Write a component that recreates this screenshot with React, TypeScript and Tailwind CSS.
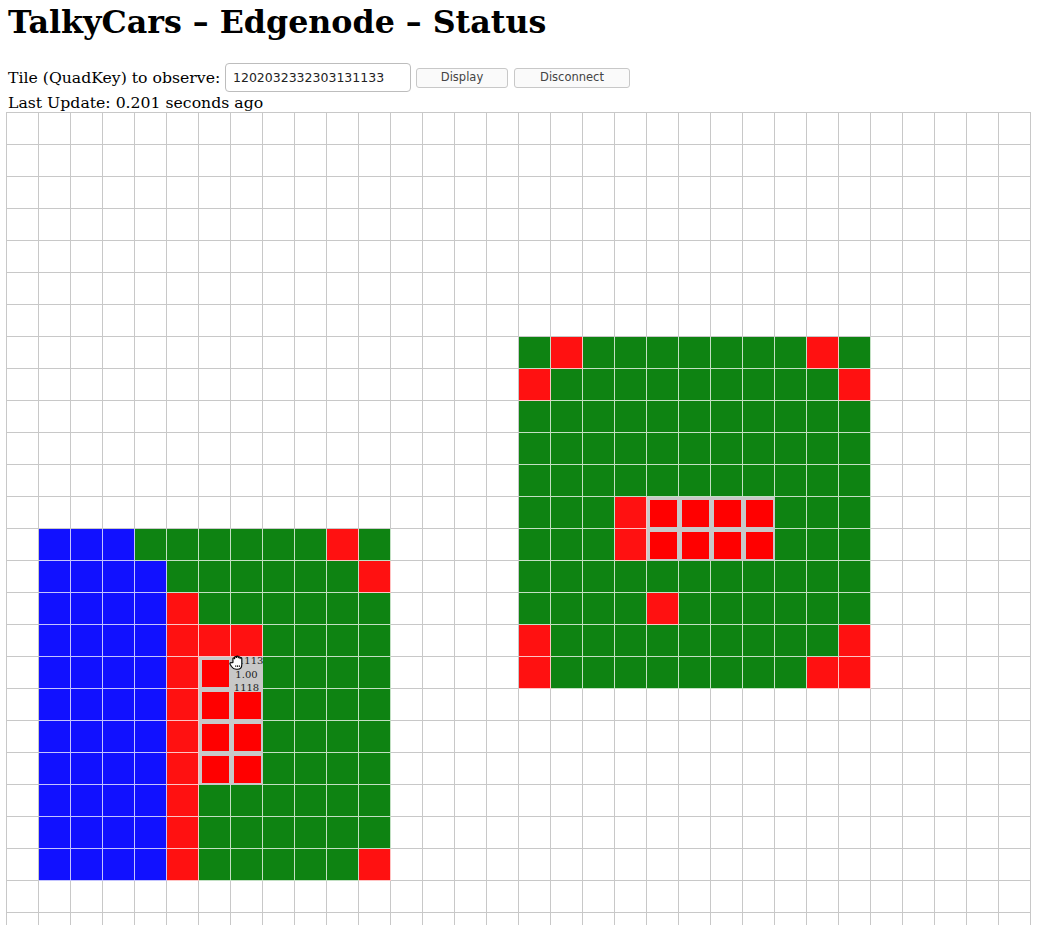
type Kind = 'B' | 'G' | 'R' | 'H' | 'T' | null

// block rows, top-left anchored at (row, col) of the tile grid
const LEFT = {
  row: 13,
  col: 1,
  cells: [
    'BBBGGGGGGRG',
    'BBBBGGGGGGR',
    'BBBBRGGGGGG',
    'BBBBRRRGGGG',
    'BBBBRHTGGGG',
    'BBBBRHHGGGG',
    'BBBBRHHGGGG',
    'BBBBRHHGGGG',
    'BBBBRGGGGGG',
    'BBBBRGGGGGG',
    'BBBBRGGGGGR',
  ],
}

const RIGHT = {
  row: 7,
  col: 16,
  cells: [
    'GRGGGGGGGRG',
    'RGGGGGGGGGR',
    'GGGGGGGGGGG',
    'GGGGGGGGGGG',
    'GGGGGGGGGGG',
    'GGGRHHHHGGG',
    'GGGRHHHHGGG',
    'GGGGGGGGGGG',
    'GGGGRGGGGGG',
    'RGGGGGGGGGR',
    'RGGGGGGGGRR',
  ],
}

const COLS = 32
const ROWS = 26

function kindAt(r: number, c: number): Kind {
  for (const block of [LEFT, RIGHT]) {
    const line = block.cells[r - block.row]
    if (!line) continue
    const ch = line[c - block.col]
    if (ch) return ch as Kind
  }
  return null
}

function HandCursor() {
  return (
    <svg width="18" height="17" viewBox="0 0 16 15" className="absolute -left-[2px] -top-[3px]">
      <path
        d="M3.5 7.5 V4.2 C3.5 3.2 5 3.2 5 4.2 V3 C5 2 6.6 2 6.6 3 V2.6 C6.6 1.6 8.2 1.6 8.2 2.6 V3.2 C8.2 2.2 9.8 2.2 9.8 3.2 V4 C9.8 3 11.4 3 11.4 4 V9 C11.4 11.5 10 13.5 7.5 13.5 H6.5 C4.5 13.5 3.2 12.5 2.2 11 L1 9 C0.5 8 1.8 7 2.6 7.8 Z"
        fill="#fff"
        stroke="#000"
        strokeWidth="1"
        strokeLinejoin="round"
      />
      <path d="M6 10 V11.5 M7.6 10 V11.5 M9.2 10 V11.5" stroke="#000" strokeWidth="0.8" />
    </svg>
  )
}

function Cell({ kind }: { kind: Kind }) {
  const base = 'w-[32px] h-[32px] border-r border-b'
  if (kind === 'B') return <div className={`${base} bg-[#1111ff] border-white/75`} />
  if (kind === 'G') return <div className={`${base} bg-[#0e8312] border-white/75`} />
  if (kind === 'R') return <div className={`${base} bg-[#ff1111] border-white/75`} />
  if (kind === 'H')
    return (
      <div className={`${base} bg-[#c8c8c8] border-[#c8c8c8] pt-[3px] pl-[3px] pr-[1px] pb-[1px]`}>
        <div className="w-full h-full bg-[#ff0000]" />
      </div>
    )
  if (kind === 'T')
    return (
      <div className={`${base} relative bg-[#c8c8c8] border-[#c8c8c8]`}>
        <div className="absolute -top-[3px] left-0 w-full text-center text-[10px] leading-[13.5px] text-[#222] font-['DejaVu_Serif',serif]">
          <div className="-mr-[2px]">11113</div>
          <div>1.00</div>
          <div>1118</div>
        </div>
        <HandCursor />
      </div>
    )
  return <div className={`${base} border-[#c8c8c8]`} />
}

export default function App() {
  const cells = []
  for (let r = 0; r < ROWS; r++) {
    for (let c = 0; c < COLS; c++) {
      cells.push(<Cell key={`${r}-${c}`} kind={kindAt(r, c)} />)
    }
  }

  return (
    <div className="h-[925px] overflow-hidden bg-white text-black font-['DejaVu_Serif',serif]">
      <div className="px-2">
        <h1 className="pt-[3px] mb-[23px] text-[31.7px] leading-[37px] font-bold">
          TalkyCars – Edgenode – Status
        </h1>
        <div className="flex items-center h-[30px] text-[15.7px]">
          <span className="w-[217px] shrink-0">Tile (QuadKey) to observe:</span>
          <input
            defaultValue="1202032332303131133"
            className="w-[186px] h-[29px] self-start rounded-[4px] border border-[#bdbdbd] pl-[7px] text-[12.5px] text-[#222] font-['DejaVu_Sans',sans-serif] outline-none"
          />
          <button className="ml-[5px] w-[92px] h-[20px] rounded-[3px] border border-[#c8c8c8] bg-[#fafafa] text-[11.5px] text-[#444] font-['DejaVu_Sans',sans-serif]">
            Display
          </button>
          <button className="ml-[6px] w-[116px] h-[20px] rounded-[3px] border border-[#c8c8c8] bg-[#fafafa] text-[11.5px] text-[#444] font-['DejaVu_Sans',sans-serif]">
            Disconnect
          </button>
        </div>
        <div className="text-[15.7px] leading-[19px]">Last Update: 0.201 seconds ago</div>
      </div>
      <div className="ml-[6px] w-[1025px] grid grid-cols-[repeat(32,32px)] border-l border-t border-[#c8c8c8]">
        {cells}
      </div>
    </div>
  )
}
